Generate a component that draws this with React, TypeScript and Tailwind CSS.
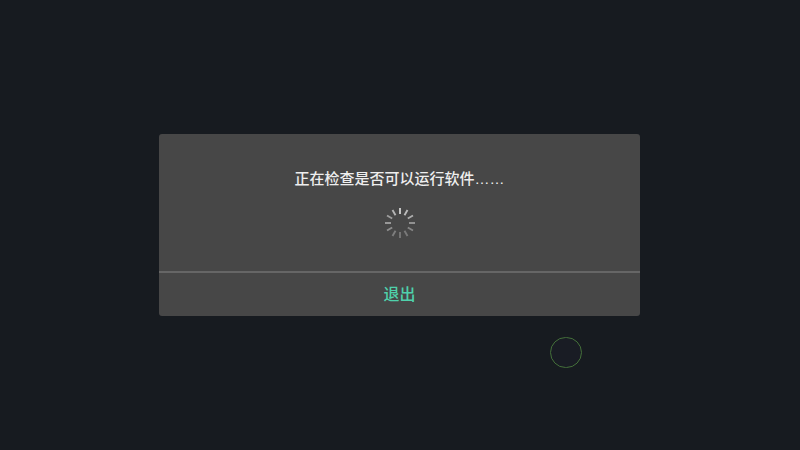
const ticks = [
  [0, 0.85], [30, 0.75], [60, 0.65], [90, 0.5], [120, 0.4], [150, 0.32],
  [180, 0.3], [210, 0.35], [240, 0.45], [270, 0.55], [300, 0.55], [330, 0.7],
];

function Spinner() {
  return (
    <svg width="32" height="32" viewBox="0 0 32 32" className="block">
      {ticks.map(([angle, opacity]) => (
        <line
          key={angle}
          x1="16"
          y1="1"
          x2="16"
          y2="7"
          stroke="#e4e4e4"
          strokeWidth="1.9"
          opacity={opacity}
          transform={`rotate(${angle} 16 16)`}
        />
      ))}
    </svg>
  );
}

export default function App() {
  return (
    <div className="relative w-[800px] h-[450px] overflow-hidden bg-[#171b20] font-['Liberation_Sans','Noto_Sans_CJK_SC',sans-serif]">
      <div className="flex h-full items-start justify-center pt-[134px]">
        <div className="mr-px flex w-[481px] h-[182px] flex-col rounded-[3px] bg-[#474747]">
          <div className="flex h-[139px] flex-col items-center border-b-2 border-[#666666]">
            <p className="mt-[35px] h-5 text-[15px] leading-5 font-medium text-[#eeeeee]">正在检查是否可以运行软件……</p>
            <div className="mt-[18px]">
              <Spinner />
            </div>
          </div>
          <div className="flex flex-1 items-center justify-center text-base font-medium text-[#4fd1ab]">退出</div>
        </div>
      </div>
      <div className="absolute left-[550px] top-[337px] h-[31px] w-[32px] rounded-full border-[1.5px] border-[#44703a] bg-[#191c24]" />
    </div>
  );
}
